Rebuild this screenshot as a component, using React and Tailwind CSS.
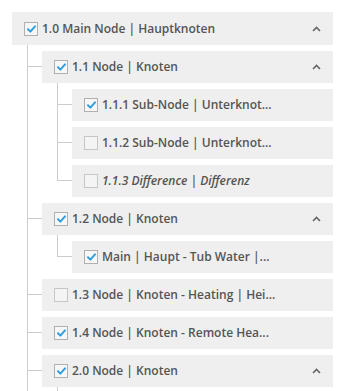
import React from "react";

// tree is cut at the bottom of the window: "open" lists keep their line going
const tree = {
  label: "1.0 Main Node | Hauptknoten",
  checked: true,
  open: true,
  children: [
    {
      label: "1.1 Node | Knoten",
      checked: true,
      children: [
        { label: "1.1.1 Sub-Node | Unterknot...", checked: true },
        { label: "1.1.2 Sub-Node | Unterknot...", checked: false },
        { label: "1.1.3 Difference | Differenz", checked: false, italic: true },
      ],
    },
    {
      label: "1.2 Node | Knoten",
      checked: true,
      children: [{ label: "Main | Haupt - Tub Water |...", checked: true }],
    },
    { label: "1.3 Node | Knoten - Heating | Hei...", checked: false },
    { label: "1.4 Node | Knoten - Remote Hea...", checked: true },
    { label: "2.0 Node | Knoten", checked: true, expanded: true, children: [] },
  ],
};

function Checkbox({ checked }) {
  if (!checked) {
    return (
      <span className="w-[14px] h-[14px] shrink-0 border border-[#c6c6c6] bg-[#f4f4f4]" />
    );
  }
  return (
    <span className="w-[14px] h-[14px] shrink-0 border border-[#b0b0b0] bg-[#f7f7f7] flex items-center justify-center">
      <svg width="9" height="8" viewBox="0 0 9 8">
        <path
          d="M1 4.3 L3.4 6.6 L8 1.4"
          fill="none"
          stroke="#2f9ee0"
          strokeWidth="2"
          strokeLinecap="round"
          strokeLinejoin="round"
        />
      </svg>
    </span>
  );
}

function Row({ node, top }) {
  return (
    <div
      className={
        "flex items-center bg-[#efefef] pl-[12px] " +
        (top ? "h-[33px]" : "h-[32px]")
      }
    >
      <Checkbox checked={node.checked} />
      <span
        className={
          "ml-[4px] flex-1 min-w-0 truncate text-[12px] font-semibold text-[#555555] " +
          (node.italic ? "italic" : "")
        }
      >
        {node.label}
      </span>
      <span className="w-[56px] shrink-0 flex justify-end pr-[12px]">
        {node.children && (
          <svg width="9" height="6" viewBox="0 0 9 6">
            <path
              d="M1 5 L4.5 1.5 L8 5"
              fill="none"
              stroke="#666666"
              strokeWidth="1.6"
            />
          </svg>
        )}
      </span>
    </div>
  );
}

function Children({ items, open }) {
  return (
    <div className="flex flex-col ml-[15px]">
      {items.map((child, i) => {
        const last = i === items.length - 1 && !open;
        return (
          <div key={child.label} className="flex">
            <div className="w-[15px] shrink-0 flex flex-col">
              <div className="h-[22px] border-l border-b border-[#cccccc]" />
              {!last && <div className="flex-1 border-l border-[#cccccc]" />}
            </div>
            <div className="flex-1 min-w-0 pt-[6px] flex flex-col">
              <Row node={child} />
              {child.children && child.children.length > 0 && (
                <Children items={child.children} open={child.open} />
              )}
              {child.expanded && child.children.length === 0 && (
                <div className="ml-[15px] h-[8px] border-l border-[#cccccc]" />
              )}
            </div>
          </div>
        );
      })}
    </div>
  );
}

export default function App() {
  return (
    <div
      className="h-[391px] overflow-hidden bg-white pt-[12px] pl-[12px] pr-[13px]"
      style={{ fontFamily: '"Open Sans", "Noto Sans", sans-serif' }}
    >
      <Row node={tree} top />
      <Children items={tree.children} open={tree.open} />
    </div>
  );
}
